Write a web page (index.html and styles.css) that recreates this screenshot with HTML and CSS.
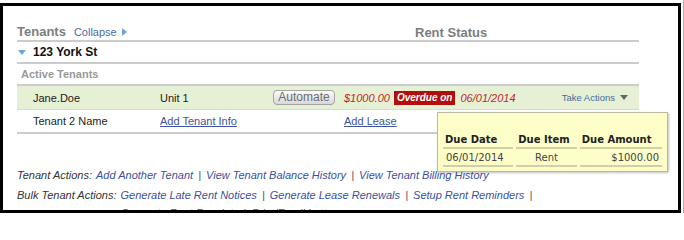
FILE: index.html
```html
<!DOCTYPE html>
<html>
<head>
<meta charset="utf-8">
<link rel="stylesheet" href="styles.css">
</head>
<body>
<div class="page">
  <div class="frame">
    <div class="head">
      <div class="head-left"><span class="title">Tenants</span><a class="collapse">Collapse</a><span class="tri-right"></span></div>
      <div class="title">Rent Status</div>
    </div>
    <div class="addr"><span class="tri-down"></span>123 York St</div>
    <div class="section">Active Tenants</div>
    <div class="row green">
      <span>Jane.Doe</span>
      <span>Unit 1</span>
      <span><button class="btn">Automate</button></span>
      <span class="status"><span class="amt">$1000.00</span><span class="badge">Overdue on</span><span class="amt">06/01/2014</span></span>
      <span class="take">Take Actions<span class="tri-grey"></span></span>
    </div>
    <div class="row">
      <span>Tenant 2 Name</span>
      <a class="link">Add Tenant Info</a>
      <span></span>
      <a class="link">Add Lease</a>
      <span></span>
    </div>
    <div class="actions">
      <div class="line"><span class="label">Tenant Actions:</span><span class="links"><a>Add Another Tenant</a> <span class="sep">|</span> <a>View Tenant Balance History</a> <span class="sep">|</span> <a>View Tenant Billing History</a></span></div>
      <div class="line"><span class="label">Bulk Tenant Actions:</span><span class="links"><a>Generate Late Rent Notices</a> <span class="sep">|</span> <a>Generate Lease Renewals</a> <span class="sep">|</span> <a>Setup Rent Reminders</a> <span class="sep">|</span> <a>Generate Rent Receipts</a> <span class="sep">|</span> <a>Print/Email Letter</a></span></div>
    </div>
    <div class="tip">
      <table>
        <tr><th class="c1">Due Date</th><th class="c2">Due Item</th><th class="c3">Due Amount</th></tr>
        <tr><td class="c1">06/01/2014</td><td class="c2">Rent</td><td class="c3">$1000.00</td></tr>
      </table>
    </div>
  </div>
</div>
</body>
</html>
```
FILE: styles.css
```css
html, body {
  margin: 0;
  background: #fff;
  font-family: "Liberation Sans", Arial, sans-serif;
  overflow: hidden;
}
.page {
  box-sizing: border-box;
  width: 684px;
  height: 213px;
  padding-top: 3px;
  border-right: 1px solid #aaa;
}
.frame {
  box-sizing: border-box;
  position: relative;
  width: 681px;
  height: 210px;
  border: 3px solid #000;
  padding: 0 39px 0 14px;
  overflow: hidden;
}
.head {
  height: 34px;
  display: flex;
  align-items: flex-end;
  border-bottom: 2px solid #ccc;
  line-height: 15px;
}
.head-left {
  width: 398px;
}
.title {
  font-size: 13px;
  font-weight: bold;
  color: #7d7d7d;
}
.collapse {
  font-size: 11px;
  color: #4b6aa8;
  margin-left: 8px;
}
.tri-right {
  display: inline-block;
  width: 0;
  height: 0;
  border-left: 5px solid #6aa5dd;
  border-top: 4px solid transparent;
  border-bottom: 4px solid transparent;
  margin-left: 5px;
}
.addr {
  height: 20px;
  display: flex;
  align-items: center;
  border-bottom: 2px solid #ccc;
  font-size: 12px;
  font-weight: bold;
  color: #111;
  padding-left: 1px;
}
.tri-down {
  width: 0;
  height: 0;
  border-top: 5px solid #6aa5dd;
  border-left: 4px solid transparent;
  border-right: 4px solid transparent;
  margin-right: 7px;
}
.section {
  height: 20px;
  line-height: 20px;
  border-bottom: 2px solid #ccc;
  font-size: 11px;
  font-weight: bold;
  color: #999;
  padding-left: 4px;
}
.row {
  display: grid;
  grid-template-columns: 127px 113px 71px 1fr auto;
  align-items: center;
  padding: 0 11px 0 16px;
  height: 22px;
  font-size: 11px;
  color: #222;
  border-bottom: 2px solid #ccc;
}
.row.green {
  height: 23px;
  background: #e6f0d4;
  border-bottom: 1px solid #d3dfc2;
}
.btn {
  display: block;
  box-sizing: border-box;
  width: 62px;
  height: 15px;
  padding: 0;
  font-family: "Liberation Sans", Arial, sans-serif;
  font-size: 12px;
  line-height: 13px;
  color: #6c6c6c;
  border: 1px solid #a5a5a5;
  border-radius: 4px;
  background: linear-gradient(#fbfbfb, #d8d8d8);
}
.status {
  display: flex;
  align-items: center;
}
.amt {
  color: #c0272d;
  font-style: italic;
}
.badge {
  display: inline-block;
  height: 14px;
  line-height: 14px;
  padding: 0 3px;
  margin: 0 5px 0 4px;
  background: #b30d0d;
  color: #fff;
  font-size: 10px;
  font-weight: bold;
  font-style: italic;
}
.take {
  font-size: 9.5px;
  color: #4c6b94;
  display: flex;
  align-items: center;
}
.tri-grey {
  width: 0;
  height: 0;
  border-top: 5px solid #666;
  border-left: 4px solid transparent;
  border-right: 4px solid transparent;
  margin-left: 5px;
}
.link {
  color: #3d55a0;
  text-decoration: underline;
}
.actions {
  margin-top: 32px;
  font-size: 11px;
  font-style: italic;
  color: #333;
  line-height: 18px;
}
.line {
  display: flex;
}
.line + .line {
  margin-top: 2px;
}
.label {
  white-space: nowrap;
  margin-right: 4px;
}
.links {
  width: 440px;
}
.links a {
  color: #3b4fa0;
}
.sep {
  color: #555;
  margin: 0 2px;
}
.tip {
  position: absolute;
  left: 434px;
  top: 106px;
  box-sizing: border-box;
  width: 231px;
  height: 60px;
  padding: 18px 2px 0;
  background: #fefec9;
  border: 1px solid #b9b9a5;
  box-shadow: 1px 1px 2px rgba(0, 0, 0, 0.25);
  font-family: "DejaVu Sans", Verdana, sans-serif;
  font-size: 10px;
}
.tip table {
  border-collapse: separate;
  border-spacing: 3px 0;
}
.tip th,
.tip td {
  height: 16px;
  padding: 0 2px;
  border-bottom: 2px solid #cfcfa8;
  white-space: nowrap;
}
.tip th {
  text-align: left;
  font-weight: bold;
  color: #222;
}
.tip td {
  color: #444;
}
.tip .c1 { width: 66px; }
.tip .c2 { width: 57px; }
.tip .c3 { width: 78px; }
.tip td.c1 { padding-left: 3px; }
.tip td.c2 { text-align: center; }
.tip td.c3 { text-align: right; padding-right: 3px; }
```
